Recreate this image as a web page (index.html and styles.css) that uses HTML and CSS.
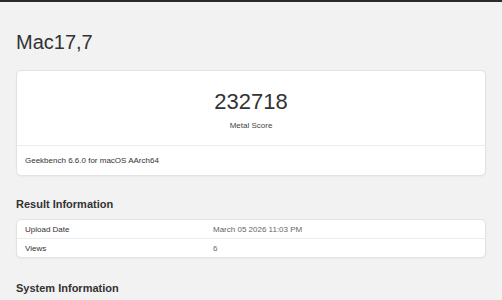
FILE: index.html
```html
<!DOCTYPE html>
<html lang="en">
<head>
    <meta charset="UTF-8">
    <title>Mac17,7 - Geekbench</title>
    <link rel="stylesheet" href="styles.css">
</head>
<body>
    <div class="topbar"></div>
    <div class="page">
        <h1 class="page-title">Mac17,7</h1>

        <div class="card score-card">
            <div class="score-main">
                <div class="score">232718</div>
                <div class="score-label">Metal Score</div>
            </div>
            <div class="score-footer">Geekbench 6.6.0 for macOS AArch64</div>
        </div>

        <h3 class="section-title">Result Information</h3>
        <div class="card info-table">
            <div class="info-row">
                <div class="info-name">Upload Date</div>
                <div class="info-value">March 05 2026 11:03 PM</div>
            </div>
            <div class="info-row">
                <div class="info-name">Views</div>
                <div class="info-value">6</div>
            </div>
        </div>

        <h3 class="section-title section-next">System Information</h3>
    </div>
</body>
</html>
```

FILE: styles.css
```css
body {
    margin: 0;
    background: #f2f2f2;
    font-family: "Liberation Sans", Arial, sans-serif;
    color: #333;
}
.topbar {
    height: 2px;
    background: #2b2b2b;
}
.page {
    padding: 0 16px;
}
.page-title {
    margin: 28px 0 16px;
    font-size: 20px;
    line-height: 24px;
    font-weight: normal;
    color: #333;
}
.card {
    background: #fff;
    border: 1px solid #e2e2e2;
    border-radius: 5px;
    box-shadow: 0 1px 2px rgba(0, 0, 0, 0.04);
}
.score-main {
    padding: 18px 0 13px;
    text-align: center;
    border-bottom: 1px solid #ececec;
}
.score {
    font-size: 22px;
    line-height: 26px;
    color: #333;
}
.score-label {
    margin-top: 5px;
    font-size: 8px;
    line-height: 12px;
    color: #444;
}
.score-footer {
    height: 29px;
    display: flex;
    align-items: center;
    padding: 0 8px;
    font-size: 8px;
    color: #333;
}
.section-title {
    margin: 21px 0 8px;
    font-size: 11px;
    line-height: 14px;
    font-weight: bold;
    color: #333;
}
.section-next {
    margin-top: 23px;
}
.info-row {
    display: grid;
    grid-template-columns: 196px 1fr;
    height: 18px;
    align-items: center;
    font-size: 8px;
}
.info-row + .info-row {
    border-top: 1px solid #ececec;
}
.info-name {
    padding-left: 8px;
    color: #333;
}
.info-value {
    color: #666;
}
```
